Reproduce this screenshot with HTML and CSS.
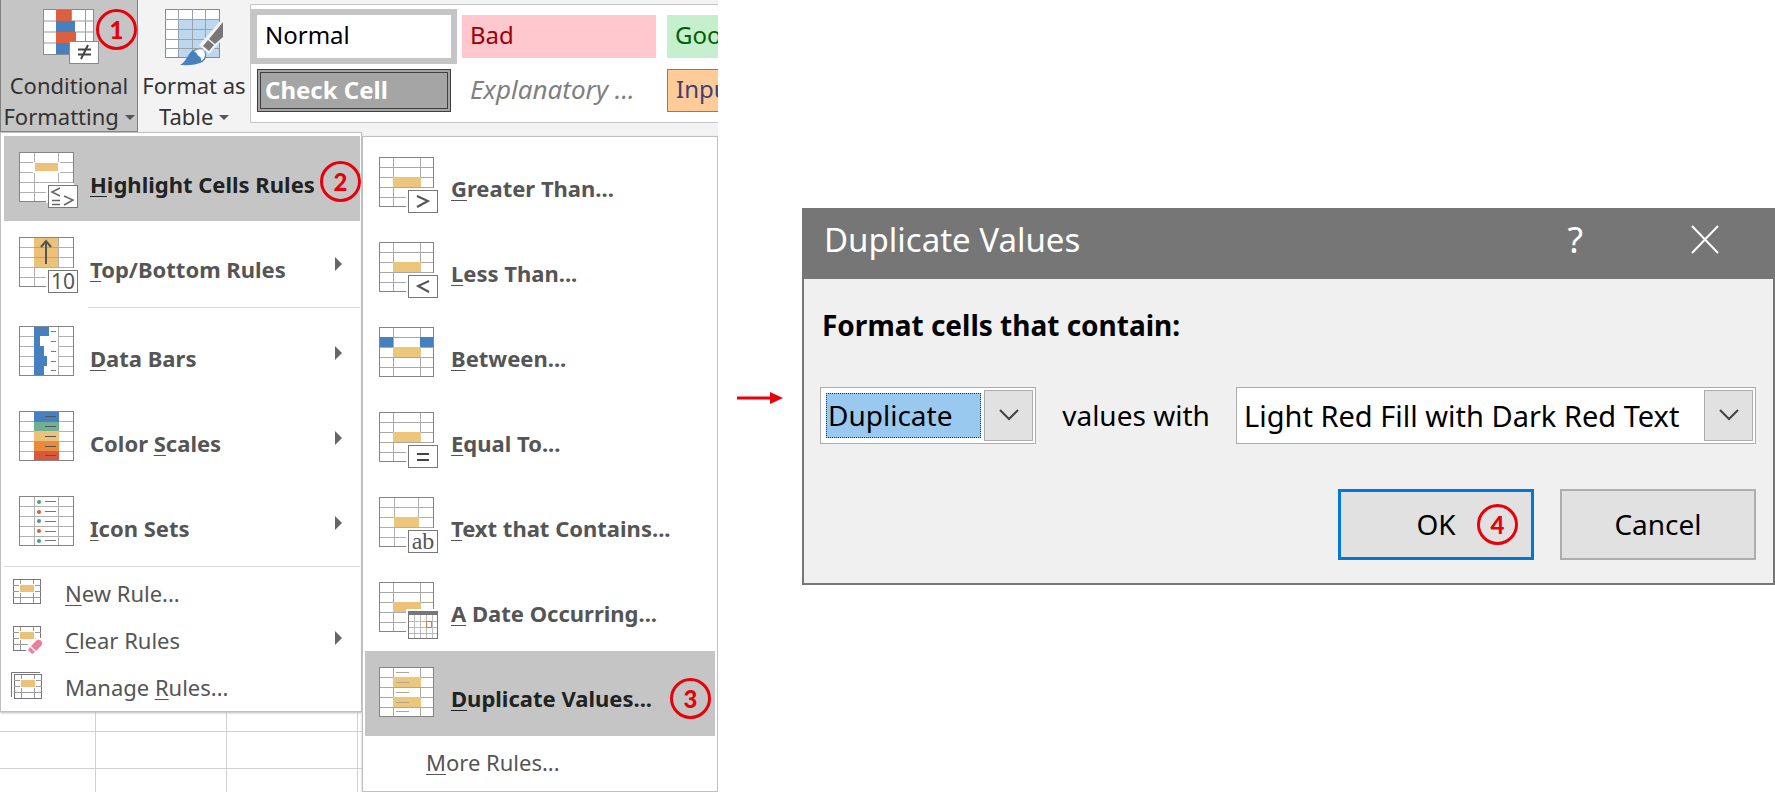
FILE: index.html
```html
<!DOCTYPE html>
<html lang="en">
  <head>
    <meta charset="utf-8">
    <title>Highlighting Duplicate Values</title>
    <link rel="stylesheet" href="styles.css">
  </head>
  <body>
    <!-- shared table outlines -->
    <svg class="defs" width="0" height="0" aria-hidden="true">
      <symbol id="table" viewBox="0 0 60 60">
        <rect x="1" y="1" width="54" height="49" fill="#fff"/>
        <path d="M1 10.5H55M1 20.5H55M1 30.5H55M1 40.5H55M15.5 1V50M39.5 1V50" stroke="#b0b0b0" fill="none"/>
        <rect x="0.5" y="0.5" width="54" height="49" stroke="#858585" fill="none"/>
      </symbol>
      <symbol id="table2" viewBox="0 0 60 60">
        <rect x="1" y="1" width="54" height="49" fill="#fff"/>
        <path d="M1 10.5H55M1 20.5H55M1 30.5H55M1 40.5H55M14.5 1V50M41.5 1V50" stroke="#a8a8a8" fill="none"/>
        <rect x="0.5" y="0.5" width="54" height="49" stroke="#858585" fill="none"/>
      </symbol>
      <symbol id="corner" viewBox="0 0 60 60">
        <rect x="27" y="31" width="28" height="20" fill="#fff"/>
        <rect x="29.5" y="33.5" width="29" height="22" stroke="#777" fill="#fff"/>
      </symbol>
      <symbol id="small" viewBox="0 0 32 30">
        <rect x="2.5" y="1.5" width="27" height="24" stroke="#777" fill="#fff"/>
        <path d="M2 7.5H30M2 13.5H30M2 19.5H30M9.5 2V25M22.5 2V25" stroke="#999" fill="none"/>
        <rect x="8" y="6" width="16" height="9" fill="#fff"/>
        <rect x="9" y="7" width="14" height="7" fill="#ecc27a"/>
      </symbol>
    </svg>

    <div class="page">
      <div class="excel">
        <div class="ribbon">
          <button class="tool active">
            <svg width="58" height="58" viewBox="0 0 58 58">
              <rect x="0.5" y="0.5" width="50" height="45" fill="#fff" stroke="#8a8a8a"/>
              <path d="M13.5 0V45M28.5 0V45M42.5 0V45M0 12H50M0 23H50M0 34H50" stroke="#999" fill="none"/>
              <rect x="13" y="1" width="15" height="11" fill="#dc6040"/>
              <rect x="13" y="12" width="19" height="11" fill="#4680be"/>
              <rect x="13" y="23" width="20" height="11" fill="#dc6040"/>
              <rect x="13" y="34" width="13" height="11" fill="#4680be"/>
              <rect x="26.5" y="32.5" width="29" height="22" fill="#fff" stroke="#8a8a8a"/>
              <path d="M35 40.5H48M35 45.5H48M45 36L38 50" stroke="#444" stroke-width="2" fill="none"/>
            </svg>
            <span>Conditional<br>Formatting <i class="caret"></i></span>
            <b class="step step1">1</b>
          </button>
          <button class="tool">
            <svg width="58" height="58" viewBox="0 0 58 58">
              <rect x="0.5" y="0.5" width="54" height="48" fill="#fff" stroke="#8a8a8a"/>
              <rect x="14" y="10" width="40" height="38" fill="#bdd7ee"/>
              <path d="M13.5 0V48M27.5 0V48M40.5 0V48M0 10.5H54M0 20.5H54M0 30.5H54M0 39.5H54" stroke="#9aa3ab" fill="none"/>
              <path d="M58 9V30L44 45L34 36Z" fill="#f3f3f3"/>
              <path d="M58 13V28L50 35L44 30Z" fill="#777"/>
              <path d="M43 31L49 36L44 42L38 37Z" fill="#777"/>
              <path d="M15 56C22 52 22 46 27 42C32 38 40 40 41 46C42 53 33 57 15 56Z" fill="#4680be"/>
              <path d="M29 43C33 38 40 40 40 46C40 49 38 51 36 52C37 47 33 48 32 45C31 43 30 43 29 43Z" fill="#fff"/>
            </svg>
            <span>Format as<br>Table <i class="caret"></i></span>
          </button>
          <div class="gallery">
            <button class="cell normal">Normal</button>
            <button class="cell bad">Bad</button>
            <button class="cell good">Good</button>
            <button class="cell check">Check Cell</button>
            <button class="cell explain">Explanatory ...</button>
            <button class="cell input">Input</button>
          </div>
        </div>

        <div class="sheet">
          <div class="menu">
            <button class="item selected">
              <svg width="60" height="60"><use href="#table"/>
                <rect x="14" y="10" width="27" height="11" fill="#fff"/>
                <rect x="16" y="11" width="23" height="8" fill="#ecc27a"/>
                <use href="#corner"/>
                <path d="M41 36L33 40L41 44M33 48.5H41M33 52.5H41M45 44L54 48L45 53" stroke="#666" stroke-width="1.5" fill="none"/></svg>
              <span><u>H</u>ighlight Cells Rules</span>
              <b class="step step2">2</b>
            </button>
            <button class="item">
              <svg width="60" height="60"><use href="#table"/>
                <rect x="15" y="1" width="24" height="29" fill="#ecc27a"/>
                <path d="M15 10.5H39M15 20.5H39" stroke="#c9a35e"/>
                <path d="M27 27V5M22 10L27 4L32 10" stroke="#555" stroke-width="2" fill="none"/>
                <use href="#corner"/>
                <text class="ten" x="44" y="52" text-anchor="middle">10</text></svg>
              <span><u>T</u>op/Bottom Rules</span><i class="more"></i>
            </button>
            <hr class="inset">
            <button class="item">
              <svg width="60" height="60"><use href="#table"/>
                <rect x="16" y="1" width="23" height="48" fill="#fff"/>
                <path d="M15 1H30V10H21V20H25V30H28V40H25V49H15Z" fill="#4680be"/>
                <path d="M32 5.5H37M32 15.5H37M32 25.5H37M32 35.5H37M32 44.5H37" stroke="#777"/></svg>
              <span><u>D</u>ata Bars</span><i class="more"></i>
            </button>
            <button class="item">
              <svg width="60" height="60"><use href="#table"/>
                <rect x="15" y="1" width="25" height="10" fill="#4680be"/>
                <rect x="15" y="11" width="25" height="9" fill="#72ae92"/>
                <rect x="15" y="20" width="25" height="10" fill="#ecc27a"/>
                <rect x="15" y="30" width="25" height="10" fill="#e98a3c"/>
                <rect x="15" y="40" width="25" height="9" fill="#d9573c"/>
                <path d="M26 5.5H37M26 15.5H37M26 25.5H37M26 35.5H37M26 44.5H37" stroke="#555"/></svg>
              <span>Color <u>S</u>cales</span><i class="more"></i>
            </button>
            <button class="item">
              <svg width="60" height="60"><use href="#table"/>
                <g fill="#45a080"><circle cx="20" cy="6" r="2"/><circle cx="20" cy="25" r="2"/><circle cx="20" cy="45" r="2"/></g>
                <g fill="#d9602c"><circle cx="20" cy="16" r="2"/><circle cx="20" cy="35" r="2"/></g>
                <path d="M26 5.5H37M26 15.5H37M26 25.5H37M26 35.5H37M26 44.5H37" stroke="#777"/></svg>
              <span><u>I</u>con Sets</span><i class="more"></i>
            </button>
            <hr>
            <button class="item short">
              <svg width="32" height="30"><use href="#small"/></svg>
              <span><u>N</u>ew Rule...</span>
            </button>
            <button class="item short">
              <svg width="32" height="30"><use href="#small"/>
                <path d="M14 29L17 19L25 13H32V30Z" fill="#fff"/>
                <path d="M20 21L26 15Q29 14 31 17L31 20L25 26Z" fill="#ec7f9d"/>
                <path d="M19 22L24 27L21 29L17 25Z" fill="#ec7f9d"/></svg>
              <span><u>C</u>lear Rules</span><i class="more"></i>
            </button>
            <button class="item short">
              <svg width="32" height="30"><path d="M0.5 25V0.5H29" stroke="#777" fill="none"/><use href="#small" x="1" y="1"/></svg>
              <span>Manage <u>R</u>ules...</span>
            </button>
          </div>

          <div class="menu submenu">
            <button class="item">
              <svg width="60" height="60"><use href="#table2"/><rect x="14" y="20" width="28" height="10" fill="#ecc67a"/>
                <use href="#corner"/><path d="M38 39L49 44L38 50" stroke="#555" stroke-width="2" fill="none"/></svg>
              <span><u>G</u>reater Than...</span>
            </button>
            <button class="item">
              <svg width="60" height="60"><use href="#table2"/><rect x="14" y="20" width="28" height="10" fill="#ecc67a"/>
                <use href="#corner"/><path d="M50 39L39 44L50 50" stroke="#555" stroke-width="2" fill="none"/></svg>
              <span><u>L</u>ess Than...</span>
            </button>
            <button class="item">
              <svg width="60" height="60"><use href="#table2"/><rect x="14" y="20" width="28" height="10" fill="#ecc67a"/>
                <rect x="1" y="10" width="13" height="10" fill="#4680be"/><rect x="41" y="10" width="13" height="10" fill="#4680be"/></svg>
              <span><u>B</u>etween...</span>
            </button>
            <button class="item">
              <svg width="60" height="60"><use href="#table2"/><rect x="14" y="20" width="28" height="10" fill="#ecc67a"/>
                <use href="#corner"/><path d="M38 42H50M38 48H50" stroke="#444" stroke-width="2" fill="none"/></svg>
              <span><u>E</u>qual To...</span>
            </button>
            <button class="item">
              <svg width="60" height="60"><use href="#table"/><rect x="15" y="20" width="25" height="10" fill="#ecc67a"/>
                <use href="#corner"/><text class="ab" x="44" y="52" text-anchor="middle">ab</text></svg>
              <span><u>T</u>ext that Contains...</span>
            </button>
            <button class="item">
              <svg width="60" height="60"><use href="#table2"/><rect x="14" y="20" width="28" height="10" fill="#ecc27a"/>
                <rect x="27" y="27" width="33" height="32" fill="#fff"/>
                <rect x="29.5" y="29.5" width="29" height="27" stroke="#777" fill="#fff"/>
                <path d="M35.5 33V56M41.5 33V56M47.5 33V56M53.5 33V56M30 39.5H58M30 45.5H58M30 51.5H58" stroke="#bbb"/>
                <rect x="29" y="29" width="30" height="4" fill="#777"/>
                <rect x="47.5" y="39.5" width="5" height="6" stroke="#e8743b" fill="#fff"/></svg>
              <span><u>A</u> Date Occurring...</span>
            </button>
            <button class="item selected">
              <svg width="60" height="60"><use href="#table2"/><rect x="14" y="10" width="28" height="10" fill="#ecc67a"/><rect x="14" y="30" width="28" height="10" fill="#ecc67a"/>
                <path d="M17 5.5H30M17 15.5H30M17 25.5H30M17 35.5H30M17 44.5H30" stroke="#b5a58c"/></svg>
              <span><u>D</u>uplicate Values...</span>
              <b class="step step3">3</b>
            </button>
            <button class="item short last"><span><u>M</u>ore Rules...</span></button>
          </div>
        </div>
      </div>

      <svg class="arrow" width="46" height="12" viewBox="0 0 46 12">
        <path d="M0 6H35" stroke="#e8000b" stroke-width="3"/>
        <path d="M33 0L46 6L33 12Z" fill="#e8000b"/>
      </svg>

      <div class="dialog">
        <div class="title">
          <span>Duplicate Values</span>
          <button class="help" aria-label="Help">?</button>
          <button class="close" aria-label="Close">
            <svg width="28" height="31" viewBox="0 0 28 31"><path d="M1 2L27 29M27 2L1 29" stroke="#fff" stroke-width="2" fill="none"/></svg>
          </button>
        </div>
        <div class="body">
          <label class="heading" for="kind">Format cells that contain:</label>
          <div class="fields">
            <div class="combo kind">
              <select id="kind"><option>Duplicate</option><option>Unique</option></select>
              <span class="drop"><svg width="20" height="12" viewBox="0 0 20 12"><path d="M1 1L10 10L19 1" stroke="#444" stroke-width="2" fill="none"/></svg></span>
            </div>
            <label class="with" for="format">values with</label>
            <div class="combo format">
              <select id="format"><option>Light Red Fill with Dark Red Text</option></select>
              <span class="drop"><svg width="20" height="12" viewBox="0 0 20 12"><path d="M1 1L10 10L19 1" stroke="#444" stroke-width="2" fill="none"/></svg></span>
            </div>
          </div>
          <div class="actions">
            <button class="ok">OK<b class="step step4">4</b></button>
            <button>Cancel</button>
          </div>
        </div>
      </div>
    </div>
  </body>
</html>
```
FILE: styles.css
```css
*{box-sizing:border-box;}

body{margin:0; background:#fff; font-family:"Noto Sans", "Open Sans", sans-serif; font-size:22px; color:#333;}

button, select{font:inherit; color:inherit; margin:0; padding:0; border:0; border-radius:0; background:none;}

.defs{display:block; height:0;}

.page{display:grid; grid-template-columns:718fr 84fr 973fr; align-items:center; min-height:100vh;}

/* ribbon */
.excel{align-self:stretch; display:flex; flex-direction:column; overflow:hidden;}

.ribbon{display:flex; height:132px; background:#f3f3f3;}

.tool{position:relative; flex:none; width:112px; padding-top:9px; line-height:31px; text-align:center;}

.tool svg{display:block; margin:0 auto;}

.tool span{display:block; white-space:nowrap; padding-top:3px;}

.tool.active{width:138px; background:#c5c5c5; border:1px solid #808080; border-top:0;}

.tool.active svg{margin-left:42px;}

.caret{display:inline-block; border:5px solid transparent; border-top-color:#555; border-bottom:0; vertical-align:5px;}

.gallery{flex:1; min-width:0; height:119px; margin-top:4px; padding:10px 6px; display:grid; grid-template-columns:repeat(3, 194px); grid-template-rows:43px 43px; gap:11px; align-content:start; overflow:hidden; background:#fff; border:1px solid #c6c6c6; border-right:0;}

.cell{padding:0 8px 4px; text-align:left; line-height:34px; font-size:24px; white-space:nowrap;}

.normal{color:#000; background:#fff; box-shadow:0 0 0 6px #c5c5c5;}

.bad{color:#9c0006; background:#ffc7ce;}

.good{color:#006100; background:#c6efce;}

.check{color:#fff; font-weight:bold; background:#a5a5a5; border:4px double #3f3f3f; padding:0 4px 4px;}

.explain{color:#7f7f7f; font-size:26px; font-style:italic;}

.input{color:#3f3f76; background:#ffcc99; border:1px solid #7f7f7f;}

/* worksheet with the open menus over it */
.sheet{flex:1; display:flex; align-items:flex-start; background:linear-gradient(#f3f3f3, #f3f3f3) no-repeat 0 0/100% 4px, linear-gradient(#d0d0d0 1px, transparent 1px) 0 7px/100% 37px, linear-gradient(90deg, #d0d0d0 1px, transparent 1px) 95px 0/131px 100%;}

.menu{position:relative; flex:none; width:362px; padding:3px 1px 2px 3px; background:#fff; border:1px solid #c0c0c0; box-shadow:0 1px 2px #bbb;}

.submenu{flex:1; min-width:0; margin-top:4px; padding:4px 2px 1px 2px;}

.item{position:relative; display:flex; align-items:flex-start; gap:11px; width:100%; height:85px; padding:16px 0 0 15px; text-align:left; line-height:30px; font-weight:bold; color:#555; white-space:nowrap;}

.item > svg{flex:none;}

.item span{padding-top:17px;}

.item u{text-decoration-thickness:1px; text-underline-offset:3px;}

.submenu .item{padding-left:14px; gap:12px;}

.submenu .item span{padding-top:16px;}

.item.selected{background:#c5c5c5; color:#222;}

.more{position:absolute; right:18px; top:36px; border:7px solid transparent; border-left-color:#666; border-right:0;}

.menu hr{height:1px; margin:1px 0; border:0; background:#d8d8d8;}

.menu hr.inset{margin:1px 0 2px 84px;}

.item.short{height:47px; padding:8px 0 0 7px; font-weight:normal; gap:22px;}

.short > svg{margin-top:2px;}

.item.short span{padding-top:2px;}

.short .more{top:16px;}

.submenu .item.last{height:54px; padding:9px 0 0 61px;}

.ten{font-size:21px; font-weight:normal; fill:#555;}

.ab{font-family:"Liberation Serif", serif; font-size:24px; font-weight:normal; fill:#555;}

/* numbered callouts */
.step{position:absolute; width:41px; height:41px; border:3px solid #e8000b; border-radius:50%; font-family:Lato, sans-serif; font-size:24px; font-weight:900; line-height:35px; text-align:center; color:#e8000b;}

.step1{right:0; top:9px;}

.step2{right:-1px; top:25px;}

.step3{right:4px; top:27px;}

.step4{right:13px; top:12px;}

.arrow{justify-self:center; margin-top:4px;}

/* dialog */
.dialog{background:#f0f0f0; border:2px solid #767676; border-top:0; font-size:28px; color:#000;}

.title{display:flex; align-items:center; height:71px; padding:0 54px 7px 20px; background:#767676; color:#fff; font-size:33px;}

.title span{flex:1;}

.title button{display:flex; color:#fff;}

.help{margin-right:108px; font-size:36px;}

.body{padding:22px 17px 23px 16px;}

.heading{display:block; padding-left:2px; line-height:48px; font-weight:bold;}

.fields{display:grid; grid-template-columns:216fr 200fr 520fr; align-items:center; margin-top:38px;}

.with{text-align:center;}

.combo{display:flex; gap:3px; height:57px; padding:2px; background:#fff; border:1px solid #adadad;}

.combo select{flex:1; min-width:0; appearance:none; padding:0 5px; outline:0;}

.format select{font-size:29px;}

.combo.kind select{margin:3px 0 3px 3px; padding:0 1px; background:#99c9ef; border:1px dotted #333;}

.drop{display:grid; place-items:center; width:49px; background:#e1e1e1; border:1px solid #adadad;}

.actions{display:flex; justify-content:flex-end; gap:26px; margin-top:45px;}

.actions button{position:relative; width:196px; height:71px; background:#e1e1e1; border:2px solid #adadad;}

.actions .ok{border:3px solid #0078d7;}
```
